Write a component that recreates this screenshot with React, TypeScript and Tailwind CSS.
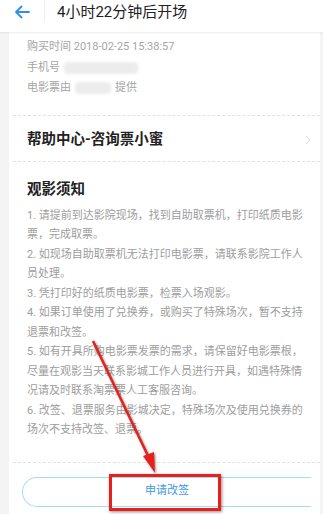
import { ChevronRight } from 'lucide-react';

const notices = [
  '1. 请提前到达影院现场，找到自助取票机，打印纸质电影票，完成取票。',
  '2. 如现场自助取票机无法打印电影票，请联系影院工作人员处理。',
  '3. 凭打印好的纸质电影票，检票入场观影。',
  '4. 如果订单使用了兑换券，或购买了特殊场次，暂不支持退票和改签。',
  '5. 如有开具所购电影票发票的需求，请保留好电影票根，尽量在观影当天联系影城工作人员进行开具，如遇特殊情况请及时联系淘票票人工客服咨询。',
  '6. 改签、退票服务由影城决定，特殊场次及使用兑换券的场次不支持改签、退票。',
];

export default function App() {
  return (
    <div className="relative w-[323px] h-[514px] overflow-hidden bg-[#f4f4f4] font-['Roboto','Noto_Sans_CJK_SC',sans-serif]">
      <header className="relative z-10 h-[32px] bg-white flex items-start shadow-[0_1px_2px_rgba(0,0,0,0.08)]">
        <button className="w-[44px] h-[24px] flex items-center justify-center">
          <svg width="16" height="14" viewBox="0 0 16 14" fill="none">
            <path d="M15 7H2M7.5 1.5L2 7l5.5 5.5" stroke="#2f8ded" strokeWidth="1.8" strokeLinecap="round" strokeLinejoin="round" />
          </svg>
        </button>
        <div className="w-px h-[22px] bg-[#eeeeee]" />
        <h1 className="ml-[12px] mt-[2px] text-[15px] leading-[20px] text-[#222]">4小时22分钟后开场</h1>
      </header>

      <div className="ml-[9px] mr-[3px] bg-white">
        <div className="pl-[18px] pt-[5px] text-[11px] leading-[20.5px] text-[#a5a5a5]">
          <p>购买时间 2018-02-25 15:38:57</p>
          <p className="flex items-center gap-[4px]">
            手机号
            <span className="inline-block w-[74px] h-[12px] rounded-sm bg-[#ececec] blur-[1.5px]" />
          </p>
          <p className="flex items-center gap-[4px]">
            电影票由
            <span className="inline-block w-[36px] h-[12px] rounded-sm bg-[#ececec] blur-[1.5px]" />
            提供
          </p>
        </div>

        <div className="mt-[16px] ml-[4px] border-t border-dashed border-[#e2e2e2]" />
        <div className="h-[45px] pl-[18px] pr-[5px] pt-[3px] flex items-center justify-between">
          <span className="text-[14.5px] font-bold text-[#222]">帮助中心-咨询票小蜜</span>
          <ChevronRight size={14} strokeWidth={1.3} className="text-[#c8c8c8]" />
        </div>
        <div className="ml-[4px] border-t border-dashed border-[#e2e2e2]" />

        <div className="pl-[18px] pt-[18px]">
          <h2 className="text-[14.5px] leading-[20px] font-bold text-[#222]">观影须知</h2>
          <div className="mt-[6px] w-[280px] text-[11px] leading-[19.5px] text-[#9d9d9d]">
            {notices.map((n) => (
              <p key={n}>{n}</p>
            ))}
          </div>
        </div>

        <div className="mt-[22px] ml-[4px] border-t border-dashed border-[#e2e2e2]" />
        <div className="pt-[14px] pb-[8px] pl-[13px] pr-[9px]">
          <button className="w-full h-[30px] rounded-l-full border border-r-0 border-[#aad9f5] flex items-center justify-center text-[11px] text-[#3f9ae2]">
            申请改签
          </button>
        </div>
      </div>

      <div className="absolute left-[109px] top-[474px] w-[112px] h-[37px] border-[3px] border-[#e8201c] shadow-[1px_1px_3px_rgba(0,0,0,0.45)]" />
      <svg className="absolute left-0 top-0 pointer-events-none" width="323" height="514">
        <g style={{ filter: 'drop-shadow(1px 1px 1px rgba(0,0,0,0.45))' }}>
          <line x1="93" y1="341" x2="150" y2="460" stroke="#e8201c" strokeWidth="2.5" />
          <path d="M155 473 L143 456 L154 452 Z" fill="#e8201c" />
        </g>
      </svg>
    </div>
  );
}
